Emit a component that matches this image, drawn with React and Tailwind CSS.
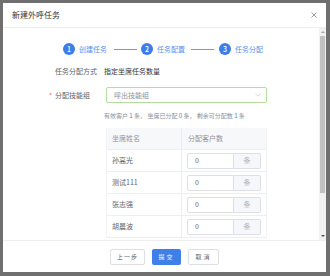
import React from "react";

const FONT = { fontFamily: '"Noto Sans CJK SC", "Noto Sans", sans-serif' };

function Step({ n, label }) {
  return (
    <div className="flex items-center">
      <div className="w-[12px] h-[12px] rounded-full bg-[#3c7ee9] text-white text-[7px] leading-[12px] text-center font-medium">
        {n}
      </div>
      <span className="ml-[4px] text-[7px] leading-[10px] text-[#5b8fe9] whitespace-nowrap">{label}</span>
    </div>
  );
}

function Line() {
  return <div className="h-px w-[23px] bg-[#6b9bec]" />;
}

function Row({ name, last }) {
  return (
    <div className={`flex h-[22px] ${last ? "" : "border-b"} border-[#ebeef5]`}>
      <div className="w-[75px] border-r border-[#ebeef5] pl-[5px] flex items-center text-[7px] text-[#606266]">
        {name}
      </div>
      <div className="flex-1 flex items-center pl-[5px]">
        <div className="flex h-[16px] w-[74px]">
          <div className="w-[47px] h-full border border-[#dcdfe6] rounded-l-[2px] bg-white pl-[7px] flex items-center text-[7px] text-[#606266]">
            0
          </div>
          <div className="flex-1 h-full border border-l-0 border-[#dcdfe6] rounded-r-[2px] bg-[#f5f7fa] flex items-center justify-center text-[7px] text-[#b0b3b8]">
            条
          </div>
        </div>
      </div>
    </div>
  );
}

export default function App() {
  return (
    <div className="w-[330px] h-[276px] bg-[#6f6f6f] pt-[3px] pl-[3px] overflow-hidden" style={FONT}>
      <div className="w-[323px] h-[269px] bg-white flex flex-col">
        {/* header */}
        <div className="h-[25px] border-b border-[#eeeeee] flex items-center justify-between pl-[9px] pr-[9px]">
          <span className="text-[8px] text-[#303133]">新建外呼任务</span>
          <svg width="6" height="6" viewBox="0 0 6 6">
            <path d="M0.5 0.5L5.5 5.5M5.5 0.5L0.5 5.5" stroke="#909399" strokeWidth="0.9" />
          </svg>
        </div>
        {/* body */}
        <div className="h-[212px] flex">
          <div className="flex-1 overflow-hidden">
            <div className="pt-[15px] pl-[60px] flex items-center">
              <Step n="1" label="创建任务" />
              <div className="ml-[7px]"><Line /></div>
              <div className="ml-[4px]"><Step n="2" label="任务配置" /></div>
              <div className="ml-[6px]"><Line /></div>
              <div className="ml-[5px]"><Step n="3" label="任务分配" /></div>
            </div>

            <div className="mt-[11px] flex items-center h-[10px] text-[7px] leading-[10px]">
              <span className="ml-[52px] w-[49px] text-[#606266]">任务分配方式</span>
              <span className="text-[#303133]">指定坐席任务数量</span>
            </div>

            <div className="mt-[11px] flex items-center h-[16px]">
              <span className="ml-[46px] w-[6px] text-[7px] text-[#f56c6c] leading-[10px]">*</span>
              <span className="w-[51px] text-[7px] text-[#606266] leading-[10px]">分配技能组</span>
              <div className="w-[161px] h-[16px] border border-[#b5dca1] rounded-[2px] flex items-center justify-between pl-[7px] pr-[5px]">
                <span className="text-[7px] text-[#909399]">呼出技能组</span>
                <svg width="6" height="4" viewBox="0 0 6 4">
                  <path d="M0.5 0.8L3 3.2L5.5 0.8" stroke="#c0c4cc" strokeWidth="0.7" fill="none" />
                </svg>
              </div>
            </div>

            <div className="mt-[9px] ml-[101px] h-[8px] text-[6px] leading-[8px] text-[#8c8f96] whitespace-nowrap">
              有效客户 <span className="text-[#3c7ee9]">1</span> 条， 坐席已分配 <span className="text-[#3c7ee9]">0</span> 条， 剩余可分配数 <span className="text-[#3c7ee9]">1</span> 条
            </div>

            <div className="mt-[8px] ml-[103px] w-[161px] border-x border-[#f0f2f6]">
              <div className="flex h-[22px] bg-[#f7f8fa] border-b border-[#ebeef5]">
                <div className="w-[75px] border-r border-[#ebeef5] pl-[5px] flex items-center text-[7px] text-[#909399]">
                  坐席姓名
                </div>
                <div className="flex-1 pl-[6px] flex items-center text-[7px] text-[#909399]">分配客户数</div>
              </div>
              <Row name="孙高光" />
              <Row name="测试111" />
              <Row name="张志强" />
              <Row name="胡晨波" />
            </div>
          </div>
          {/* scrollbar */}
          <div className="w-[7px] bg-[#f1f1f1] flex flex-col items-center">
            <div className="h-[8px] flex items-center justify-center">
              <div className="w-0 h-0 border-x-[2px] border-x-transparent border-b-[2px] border-b-[#a3a3a3]" />
            </div>
            <div className="w-[5px] h-[157px] bg-[#c1c1c1]" />
            <div className="flex-1" />
            <div className="h-[8px] flex items-center justify-center">
              <div className="w-0 h-0 border-x-[2px] border-x-transparent border-t-[2px] border-t-[#505050]" />
            </div>
          </div>
        </div>
        {/* footer */}
        <div className="h-[32px] border-t border-[#eeeeee] flex items-center justify-center gap-[7px]">
          <button className="w-[35px] h-[16px] border border-[#dcdfe6] rounded-[2px] bg-white text-[6px] text-[#606266] tracking-[1px]">
            上一步
          </button>
          <button className="w-[29px] h-[16px] rounded-[2px] bg-[#3f7fea] text-[6px] text-white tracking-[2px]">
            提交
          </button>
          <button className="w-[31px] h-[16px] border border-[#dcdfe6] rounded-[2px] bg-white text-[6px] text-[#606266] tracking-[2px]">
            取消
          </button>
        </div>
      </div>
    </div>
  );
}
